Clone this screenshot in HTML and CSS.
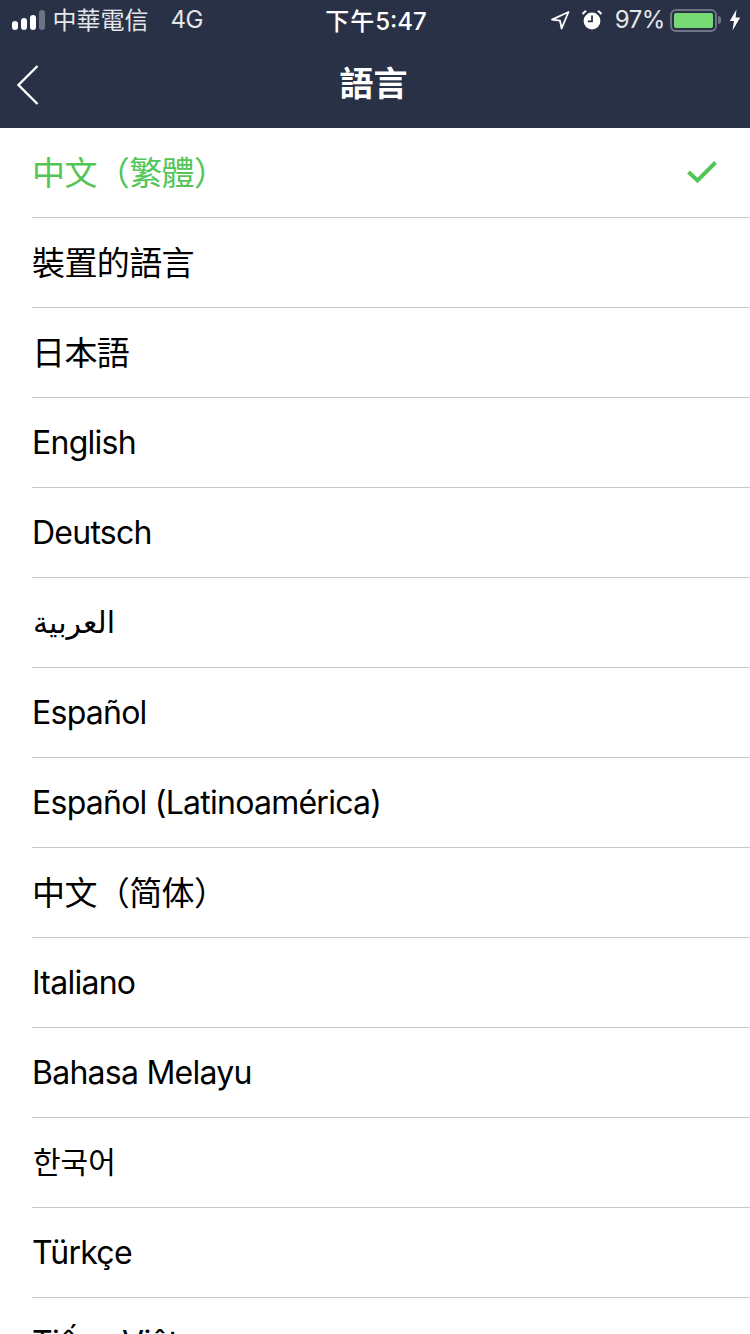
FILE: index.html
```html
<!DOCTYPE html>
<html lang="zh-Hant">
<head>
    <meta charset="UTF-8">
    <meta name="viewport" content="width=device-width, initial-scale=1.0">
    <title>語言</title>
    <link rel="stylesheet" href="styles.css">
</head>
<body>
    <header class="topbar">
        <div class="status">
            <div class="status-left">
                <div class="signal">
                    <span class="dot d1"></span>
                    <span class="dot d2"></span>
                    <span class="dot d3"></span>
                    <span class="dot d4"></span>
                </div>
                <span class="carrier">中華電信</span>
                <span class="network">4G</span>
            </div>
            <div class="clock"><span class="clock-cjk">下午</span>5:47</div>
            <div class="status-right">
                <svg class="icon-location" width="20" height="20" viewBox="0 0 20 20">
                    <path d="M18.5 2 L2 9.6 L10 10.6 L11.6 18.5 Z" fill="none" stroke="#fff" stroke-width="1.8" stroke-linejoin="round"/>
                </svg>
                <svg class="icon-alarm" width="22" height="22" viewBox="0 0 22 22">
                    <circle cx="11" cy="12" r="8.4" fill="#fff"/>
                    <path d="M11 6.5 V12.4 H6.8" fill="none" stroke="#293146" stroke-width="1.8"/>
                    <path d="M1.5 5 L5 1.8 M20.5 5 L17 1.8" stroke="#fff" stroke-width="2"/>
                </svg>
                <span class="battery-pct">97%</span>
                <div class="battery">
                    <div class="battery-fill"></div>
                </div>
                <span class="battery-cap"></span>
                <svg class="icon-bolt" width="12" height="22" viewBox="0 0 12 22">
                    <path d="M7.5 0.5 L0.8 12 H5 L3.5 21.5 L11.2 8.6 H6.6 Z" fill="#fff"/>
                </svg>
            </div>
        </div>
        <nav class="navbar">
            <svg class="back" width="24" height="42" viewBox="0 0 24 42">
                <path d="M21.5 2 L2.5 21 L21.5 40" fill="none" stroke="#fff" stroke-width="2.4"/>
            </svg>
            <h1 class="title">語言</h1>
        </nav>
    </header>

    <ul class="lang-list">
        <li class="lang-row selected">
            <span class="lang-name cjk">中文（繁體）</span>
            <svg class="check" width="32" height="26" viewBox="0 0 32 26">
                <path d="M2.5 13 L11.5 21.5 L29.5 3.5" fill="none" stroke="#53c557" stroke-width="4"/>
            </svg>
        </li>
        <li class="lang-row"><span class="lang-name cjk">裝置的語言</span></li>
        <li class="lang-row"><span class="lang-name cjk" lang="ja">日本語</span></li>
        <li class="lang-row"><span class="lang-name">English</span></li>
        <li class="lang-row"><span class="lang-name">Deutsch</span></li>
        <li class="lang-row"><span class="lang-name arabic" lang="ar">العربية</span></li>
        <li class="lang-row"><span class="lang-name">Español</span></li>
        <li class="lang-row"><span class="lang-name">Español (Latinoamérica)</span></li>
        <li class="lang-row"><span class="lang-name cjk" lang="zh-Hans">中文（简体）</span></li>
        <li class="lang-row"><span class="lang-name">Italiano</span></li>
        <li class="lang-row"><span class="lang-name">Bahasa Melayu</span></li>
        <li class="lang-row"><span class="lang-name korean" lang="ko">한국어</span></li>
        <li class="lang-row"><span class="lang-name">Türkçe</span></li>
        <li class="lang-row"><span class="lang-name">Tiếng Việt</span></li>
    </ul>
</body>
</html>
```

FILE: styles.css
```css
/* Page */
html, body {
    height: 1334px;
    overflow: hidden;
}
body {
    margin: 0;
    padding: 0;
    background: #fff;
    font-family: Inter, "Noto Sans CJK TC", "DejaVu Sans", sans-serif;
}

/* Header */
.topbar {
    height: 128px;
    background: #293146;
    color: #fff;
}
.status {
    height: 40px;
    display: grid;
    grid-template-columns: 1fr auto 1fr;
    align-items: center;
    font-size: 24px;
}
.status-left {
    display: flex;
    align-items: center;
    padding-left: 12px;
}
.signal {
    display: flex;
    align-items: flex-end;
    gap: 3.5px;
    margin-right: 8px;
}
.dot {
    display: block;
    width: 5.5px;
    background: #fff;
    border-radius: 3px;
}
.d1 { height: 9px; }
.d2 { height: 12px; }
.d3 { height: 15px; }
.d4 { height: 20px; background: #6d7484; }
.carrier {
    color: #e4e6ea;
    margin-bottom: 3px;
}
.network {
    margin-left: 22px;
    margin-bottom: 2px;
    color: #e4e6ea;
    letter-spacing: -0.4px;
}
.clock {
    font-weight: 500;
    padding-bottom: 2px;
    padding-left: 2px;
}
.clock-cjk {
    letter-spacing: 1px;
}
.status-right {
    display: flex;
    align-items: center;
    justify-content: flex-end;
    padding-right: 9px;
}
.icon-location {
    margin-right: 11px;
}
.icon-alarm {
    margin-right: 12px;
}
.battery-pct {
    margin-right: 5px;
    margin-bottom: 2px;
    color: #e4e6ea;
    letter-spacing: -0.4px;
}
.battery {
    width: 47px;
    height: 23px;
    box-sizing: border-box;
    border: 2px solid #6d7484;
    border-radius: 6px;
    padding: 2px;
}
.battery-fill {
    height: 100%;
    background: #78da74;
    border-radius: 2px;
}
.battery-cap {
    width: 3px;
    height: 8px;
    margin-left: 1px;
    margin-right: 8px;
    background: #6d7484;
    border-radius: 0 3px 3px 0;
}
.navbar {
    height: 88px;
    position: relative;
    display: flex;
    align-items: center;
    justify-content: center;
}
.back {
    position: absolute;
    left: 16px;
    top: 24px;
}
.title {
    margin: 0 0 5px -3px;
    font-size: 34px;
    font-weight: 700;
}

/* Language list */
.lang-list {
    list-style: none;
    margin: 0;
    padding: 0 0 0 32px;
}
.lang-row {
    height: 90px;
    box-sizing: border-box;
    padding-right: 32px;
    border-bottom: 1px solid #c8c8c8;
    display: flex;
    align-items: center;
    justify-content: space-between;
    font-size: 32px;
    letter-spacing: -0.75px;
    color: #000;
}
.cjk {
    font-size: 33px;
    letter-spacing: -0.6px;
    padding-bottom: 3px;
}
.arabic {
    font-size: 30px;
    letter-spacing: 0;
    padding-bottom: 1px;
    padding-left: 1px;
}
.korean {
    font-size: 30px;
    letter-spacing: 0;
    padding-bottom: 5px;
    padding-left: 1px;
}
.selected {
    color: #53c557;
}
.check {
    margin-bottom: 2px;
}
```
